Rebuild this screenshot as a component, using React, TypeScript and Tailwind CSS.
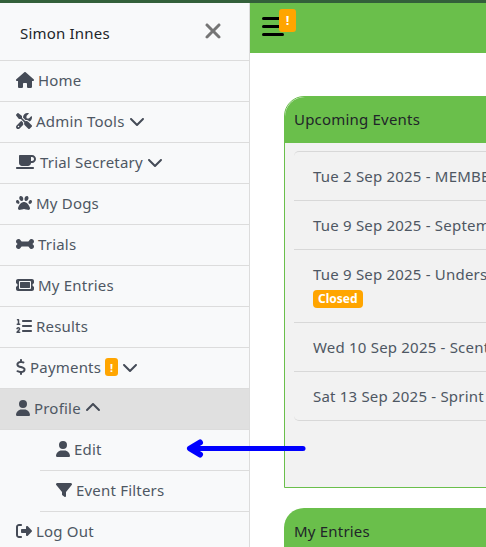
import { FaHouse, FaScrewdriverWrench, FaMugSaucer, FaPaw, FaBone, FaTicket, FaListOl, FaDollarSign, FaUser, FaFilter, FaRightFromBracket, FaXmark, FaChevronDown, FaChevronUp } from "react-icons/fa6";
import type { ReactNode } from "react";

const font = { fontFamily: '"Noto Sans", sans-serif' };

const Alert = ({ className }: { className: string }) => (
  <span className={`flex items-center justify-center rounded-[3px] bg-[#ffa500] font-bold leading-none text-white ${className}`}>!</span>
);

const Chevron = () => <FaChevronDown className="h-4 w-4 text-[#454b57]" />;

const NavRow = ({ icon, label, after, active, sub }: { icon: ReactNode; label: string; after?: ReactNode; active?: boolean; sub?: boolean }) => (
  <div className={`flex h-[41px] items-center gap-1 border-b border-[#dcdcdc] pb-[2px] pr-2 text-[15px] leading-[22px] tracking-[0.2px] text-[#4e5763] ${active ? "bg-[#e0e0e0]" : ""} ${sub ? "ml-10 pl-4" : "pl-4"}`}>
    <span className="text-[#454b57]">{icon}</span>
    <span>{label}</span>
    {after}
  </div>
);

const events = [
  "Tue 2 Sep 2025 - MEMBERS ONLY",
  "Tue 9 Sep 2025 - September Agility",
  "Tue 9 Sep 2025 - Understanding Rally",
  "Wed 10 Sep 2025 - Scentwork Trial",
  "Sat 13 Sep 2025 - Sprint Agility",
];

export default function App() {
  return (
    <div className="relative h-[547px] w-[486px] overflow-hidden bg-white" style={font}>
      <div className="h-[3px] bg-[#33603a]" />
      <div className="flex h-[544px]">
        <aside className="w-[250px] shrink-0 border-r border-[#dcdcdc] bg-[#f8f9fa]">
          <div className="flex h-[58px] items-center justify-between border-b border-[#dcdcdc] pl-5 pr-[27px] text-[15px] tracking-[0.2px] text-[#212529]">
            <span className="mt-1">Simon Innes</span>
            <FaXmark className="mb-[2px] h-6 w-[18px] text-[#757575]" />
          </div>
          <NavRow icon={<FaHouse className="h-4 w-[18px]" />} label="Home" />
          <NavRow icon={<FaScrewdriverWrench className="h-4 w-4" />} label="Admin Tools" after={<Chevron />} />
          <NavRow icon={<FaMugSaucer className="h-4 w-5" />} label="Trial Secretary" after={<Chevron />} />
          <NavRow icon={<FaPaw className="h-4 w-4" />} label="My Dogs" />
          <NavRow icon={<FaBone className="h-4 w-[18px]" />} label="Trials" />
          <NavRow icon={<FaTicket className="h-4 w-[18px]" />} label="My Entries" />
          <NavRow icon={<FaListOl className="h-4 w-4" />} label="Results" />
          <NavRow
            icon={<FaDollarSign className="h-4 w-[10px]" />}
            label="Payments"
            after={
              <>
                <Alert className="h-[18px] w-[13px] text-[11px]" />
                <Chevron />
              </>
            }
          />
          <NavRow active icon={<FaUser className="h-4 w-[14px]" />} label="Profile" after={<FaChevronUp className="h-4 w-4 text-[#454b57]" />} />
          <NavRow sub icon={<FaUser className="h-4 w-[14px]" />} label="Edit" />
          <NavRow sub icon={<FaFilter className="h-4 w-4" />} label="Event Filters" />
          <NavRow icon={<FaRightFromBracket className="h-4 w-4" />} label="Log Out" />
        </aside>

        <main className="min-w-0 flex-1">
          <header className="relative h-[50px] bg-[#6abf4b]">
            <div className="absolute left-3 top-[14px] flex w-[22px] flex-col gap-[5px]">
              <span className="h-[3px] rounded-full bg-black" />
              <span className="h-[3px] rounded-full bg-black" />
              <span className="h-[3px] rounded-full bg-black" />
            </div>
            <Alert className="absolute left-[29px] top-[6px] h-[23px] w-[17px] text-[13px]" />
          </header>

          <div className="pl-[34px] pt-[43px]">
            <section className="w-[260px] rounded-tl-[20px] border border-[#6abf4b] bg-[#f2f2f2]">
              <h2 className="flex h-[46px] items-center rounded-tl-[20px] bg-[#6abf4b] pb-[2px] pl-[9px] text-[15px] leading-[22px] tracking-[0.2px] text-[#212529]">Upcoming Events</h2>
              <ul className="ml-[9px] mt-2 rounded-l-[5px] border-y border-[#d8d8d8] text-[15px] tracking-[0.2px] text-[#4e5763]">
                {events.map((e, i) => (
                  <li key={e} className={`overflow-hidden whitespace-nowrap py-[14px] pl-[19px] ${i < 4 ? "border-b border-[#d8d8d8]" : ""}`}>
                    <div className="leading-5">{e}</div>
                    {i === 2 && <span className="mt-[6px] block w-fit rounded-[4px] bg-[#ffa500] px-[5px] py-[3px] text-[12px] font-bold leading-3 tracking-normal text-white">Closed</span>}
                  </li>
                ))}
              </ul>
              <div className="h-[66px]" />
            </section>
            <section className="mt-5 w-[260px] rounded-tl-[20px] bg-[#6abf4b]">
              <h2 className="flex h-[46px] items-center pl-[10px] text-[15px] leading-[22px] tracking-[0.2px] text-[#212529]">My Entries</h2>
            </section>
          </div>
        </main>
      </div>

      {/* annotation arrow */}
      <svg className="absolute left-[185px] top-[436px]" width="122" height="26" viewBox="0 0 122 26" fill="none">
        <path d="M118 12.5H10" stroke="#0000ff" strokeWidth="5" strokeLinecap="round" />
        <path d="M15 6.5L5 12.5L15 18.5" stroke="#0000ff" strokeWidth="6" strokeLinecap="round" strokeLinejoin="round" />
      </svg>
    </div>
  );
}
